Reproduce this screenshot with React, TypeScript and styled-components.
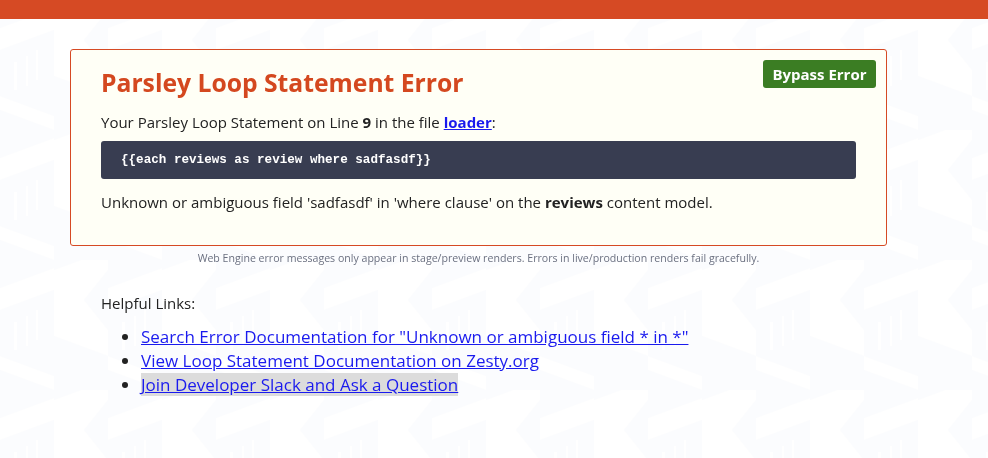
import React from "react";
import styled, { createGlobalStyle } from "styled-components";

const GlobalStyle = createGlobalStyle`
  html, body { margin: 0; padding: 0; }
  body {
    background: #ffffff;
    font-family: "Open Sans", "Noto Sans", sans-serif;
    color: #222;
  }
`;

const Backdrop = styled.svg`
  position: fixed;
  inset: 0;
  width: 100%;
  height: 100%;
  z-index: -1;
`;

const TopBar = styled.div`
  height: 19px;
  background: #d64a24;
`;

const Container = styled.main`
  width: 817px;
  margin: 30px 0 0 70px;
`;

const Card = styled.section`
  border: 1px solid #d64a24;
  border-radius: 3px;
  background: #fffff6;
  padding: 10px 10px 33px 30px;
`;

const Header = styled.div`
  display: flex;
  justify-content: space-between;
  align-items: flex-start;
`;

const Title = styled.h1`
  margin: 7px 0 0;
  font-size: 24.7px;
  line-height: 32px;
  font-weight: 700;
  color: #d4481f;
`;

const BypassButton = styled.button`
  height: 28px;
  width: 113px;
  border: none;
  border-radius: 3px;
  background: #3b7d23;
  color: #fff;
  font-family: inherit;
  font-weight: 700;
  font-size: 15px;
  cursor: pointer;
`;

const Body = styled.div`
  padding-right: 20px;
`;

const Text = styled.p<{ $top?: number }>`
  margin: ${(p) => p.$top ?? 0}px 0 0;
  font-size: 15px;
  line-height: 20px;
`;

const FileLink = styled.a`
  color: #1a1aee;
  font-weight: 700;
  text-decoration: underline;
`;

const Code = styled.pre`
  margin: 9px 0 0;
  height: 38px;
  box-sizing: border-box;
  padding: 0 20px;
  display: flex;
  align-items: center;
  background: #383d51;
  border-radius: 3px;
  color: #fff;
  font-family: "Liberation Mono", monospace;
  font-weight: 700;
  font-size: 12.6px;
`;

const Footnote = styled.p`
  margin: 5px 0 0;
  text-align: center;
  font-size: 10.6px;
  line-height: 14px;
  color: #6b7080;
`;

const Helpful = styled.section`
  padding: 28px 0 0 31px;
`;

const HelpTitle = styled.p`
  margin: 0;
  font-size: 15px;
  line-height: 20px;
`;

const LinkList = styled.ul`
  margin: 12px 0 0;
  padding-left: 40px;
`;

const Item = styled.li`
  font-size: 17px;
  line-height: 24px;
`;

const HelpLink = styled.a<{ $active?: boolean }>`
  color: #1a1aee;
  text-decoration: underline;
  background: ${(p) => (p.$active ? "#dcdcdc" : "transparent")};
`;

export default function App() {
  return (
    <>
      <GlobalStyle />
      <Backdrop aria-hidden="true">
        <defs>
          <pattern id="chev" width="108" height="130" patternUnits="userSpaceOnUse">
            <rect width="108" height="130" fill="#fbfcfe" />
            <polygon points="0,28 54,8 54,30 0,50" fill="#ffffff" />
            <polygon points="54,10 108,-10 108,10 84,40 108,70 108,96 54,76" fill="#ffffff" />
            <rect x="14" y="62" width="3" height="28" fill="#ffffff" />
            <rect x="26" y="56" width="2" height="30" fill="#ffffff" />
            <rect x="36" y="50" width="2" height="30" fill="#ffffff" />
            <polygon points="0,96 54,116 54,130 0,110" fill="#ffffff" />
          </pattern>
        </defs>
        <rect y="19" width="100%" height="100%" fill="url(#chev)" />
      </Backdrop>
      <TopBar />
      <Container>
        <Card>
          <Header>
            <Title>Parsley Loop Statement Error</Title>
            <BypassButton>Bypass Error</BypassButton>
          </Header>
          <Body>
            <Text $top={13}>
              Your Parsley Loop Statement on Line <b>9</b> in the file{" "}
              <FileLink href="#">loader</FileLink>:
            </Text>
            <Code>{"{{each reviews as review where sadfasdf}}"}</Code>
            <Text $top={13}>
              Unknown or ambiguous field 'sadfasdf' in 'where clause' on the{" "}
              <b>reviews</b> content model.
            </Text>
          </Body>
        </Card>
        <Footnote>
          Web Engine error messages only appear in stage/preview renders. Errors in
          live/production renders fail gracefully.
        </Footnote>
        <Helpful>
          <HelpTitle>Helpful Links:</HelpTitle>
          <LinkList>
            <Item>
              <HelpLink href="#">
                Search Error Documentation for "Unknown or ambiguous field * in *"
              </HelpLink>
            </Item>
            <Item>
              <HelpLink href="#">View Loop Statement Documentation on Zesty.org</HelpLink>
            </Item>
            <Item>
              <HelpLink href="#" $active>
                Join Developer Slack and Ask a Question
              </HelpLink>
            </Item>
          </LinkList>
        </Helpful>
      </Container>
    </>
  );
}
